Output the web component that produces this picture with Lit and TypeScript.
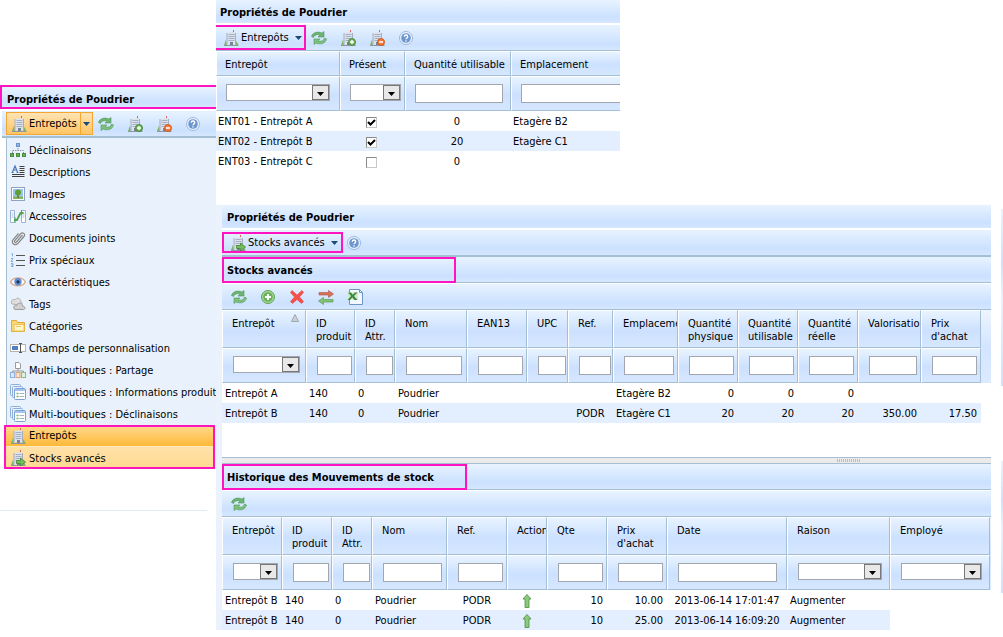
import { LitElement, html, svg, css, TemplateResult, SVGTemplateResult } from "lit";
import { customElement, property } from "lit/decorators.js";
import { classMap } from "lit/directives/class-map.js";
import { styleMap } from "lit/directives/style-map.js";

const building = svg`
  <path d="M1 15L3 9.500L4 15Z M12 15L13.500 11L15.500 15Z" fill="#7fb86c"/>
  <path d="M10.500 0V3" stroke="#e0625c"/>
  <path d="M4 3L11 2L12.500 3V14.500H4Z" fill="#dde2ea"/>
  <path d="M4 3V14.500M12.500 3V14.500" stroke="#a7aebb"/>
  <path d="M5.500 4.500H11.500M5.500 6.500H11.500M5.500 8.500H11.500M5.500 10.500H11.500" stroke="#a3b0c9"/>
  <path d="M7 12h3v3H7z" fill="#76829a"/>
  <path d="M1 15.500H15.500" stroke="#8d95a2"/>`;

const pages = svg`
  <rect x="0.500" y="0.500" width="10" height="11" rx="1" fill="#eaf2fc" stroke="#8fb0dc"/>
  <rect x="2.500" y="2.500" width="10" height="11" rx="1" fill="#eaf2fc" stroke="#8fb0dc"/>
  <rect x="4.500" y="4.500" width="11" height="11" rx="1" fill="#fff" stroke="#7ba0d4"/>
  <path d="M5 6h10" stroke="#a5c4ee" stroke-width="2"/>
  <path d="M6.500 9.500h2M6.500 12.500h2" stroke="#7db464" stroke-width="1.500"/>
  <path d="M9.500 9.500h4.500M9.500 12.500h4.500" stroke="#a3b2c8"/>`;

const ICONS: Record<string, SVGTemplateResult> = {
  building,
  buildingAdd: svg`${building}
    <circle cx="12" cy="12" r="3.500" fill="#6db259" stroke="#4d8f40"/>
    <path d="M10 12h4M12 10v4" stroke="#fff" stroke-width="1.400"/>`,
  buildingRemove: svg`${building}
    <circle cx="12" cy="12" r="3.500" fill="#f07a3c" stroke="#d65a22"/>
    <path d="M10 12h4" stroke="#fff" stroke-width="1.500"/>`,
  buildingGo: svg`${building}
    <path d="M6.500 10.500h4V8l5 4-5 4v-2.500h-4z" fill="#74be58" stroke="#448638" stroke-width=".8"/>`,
  refresh: svg`
    <path d="M0.500 6.500C1.500 2.500 6.500 1 11 3L13 1.500V7H7L9 5.200C6.500 4.200 3.500 4.700 2.500 7.500Z" fill="#6fb374" stroke="#4c9a58" stroke-width=".6"/>
    <path d="M15.500 9C14.500 13.500 9.500 15 5 13L3 14.500V9H9L7 10.800C9.500 11.800 12.500 11.300 13.500 8Z" fill="#7fbf7c" stroke="#4c9a58" stroke-width=".6"/>`,
  help: svg`
    <circle cx="8" cy="8" r="6.500" fill="#eef4fc" stroke="#9db7db"/>
    <circle cx="8" cy="8" r="4.800" fill="#6b96d0"/>
    <path d="M6.300 6.700C6.300 4.500 9.700 4.500 9.700 6.700C9.700 8 8 7.900 8 9.300M8 10.300V11.600" fill="none" stroke="#fff" stroke-width="1.400"/>`,
  add: svg`
    <circle cx="8" cy="8" r="6.500" fill="#a9d89a" stroke="#5ba352"/>
    <circle cx="8" cy="8" r="4.800" fill="#68b35b"/>
    <path d="M5 8h6M8 5v6" stroke="#fff" stroke-width="2"/>`,
  remove: svg`
    <path d="M3 1.500L8 6L13 1.500L14.500 3.500L10.500 8L14.500 12.500L12.500 14.500L8 10.500L3.500 14.500L1.500 12.500L5.500 8L1.500 3.500Z" fill="#f4504a" stroke="#e8413d" stroke-width=".6"/>`,
  swap: svg`
    <path d="M1 3.500h9.500V1.500l5 3.500-5 3.500V6H1z" fill="#d9705c" stroke="#b5503f" stroke-width=".6"/>
    <path d="M15 10.500H5.500V8.500L.5 12l5 3.500V13H15z" fill="#83c276" stroke="#4f9649" stroke-width=".6"/>`,
  excel: svg`
    <path d="M2.500.5h10l3 3v12h-13z" fill="#f3f8fe" stroke="#6c96c4"/>
    <path d="M12.500.5v3h3" fill="none" stroke="#6c96c4"/>
    <path d="M0 3h11v8H0z" fill="#d6ead2"/>
    <path d="M1 3.500h3L5.700 5.800L8 3.500h2.500L7 7L10.500 11H7.500L5.300 8.500L3 11H.5L4 7Z" fill="#3b8a3f"/>`,
  combos: svg`
    <path d="M8 6v3M2.500 11V8.500h11V11" fill="none" stroke="#8795a8" stroke-dasharray="1.500 1"/>
    <rect x="6.500" y="1.500" width="3" height="3" fill="#8fb5ec" stroke="#6a93cf"/>
    <rect x="0.500" y="11.500" width="3" height="3" fill="#5fb04f" stroke="#4a8c40"/>
    <rect x="6.500" y="11.500" width="3" height="3" fill="#5fb04f" stroke="#4a8c40"/>
    <rect x="12.500" y="11.500" width="3" height="3" fill="#5fb04f" stroke="#4a8c40"/>`,
  text: svg`
    <path d="M2.500 8L5 2L7.500 8M3.500 6h3M1.500 8.500h2M6.500 8.500h2" fill="none" stroke="#4776ba" stroke-width="1.200"/>
    <path d="M9.500 2.500h5M9.500 4.500h5M9.500 6.500h5M9.500 8.500h5M2 10.500h12.500M2 12.500h12.500" stroke="#404040"/>`,
  image: svg`
    <rect x="1.500" y="1.500" width="13" height="13" fill="#fff" stroke="#8ea2c4"/>
    <path d="M3 3h10v10H3z" fill="#9cc4ee"/>
    <path d="M3 10.500h10V13H3z" fill="#7fb95a"/>
    <path d="M7.300 8h1.400v4H7.300z" fill="#7a5b32"/>
    <circle cx="8" cy="6.500" r="3" fill="#5f9f34"/>`,
  link: svg`
    <path d="M.5 2.500h4v12h-4zM11.500 2.500h4v12h-4z" fill="#fff" stroke="#9ab3d8"/>
    <path d="M1.500 5h2M1.500 7h2M1.500 9h2M12.500 5h2M12.500 7h2M12.500 9h2" stroke="#a8bddc"/>
    <path d="M4 12H7L10.500 5h3" fill="none" stroke="#55a04f" stroke-width="1.800"/>
    <path d="M5 9v6M11.500 2v5" stroke="#55a04f"/>`,
  clip: svg`
    <path d="M12.500 5L6.500 12C5.200 13.200 3.800 12 4.800 10.700L10.500 4C12.500 1.500 16 4 14 6.500L8 13.300C5 16.500.5 13 3 9.800L8.500 3.300" fill="none" stroke="#858585" stroke-width="1.200"/>`,
  list: svg`
    <path d="M6 3.500h9M6 8.500h9M6 13.500h9" stroke="#555"/>
    <path d="M1.500 2l1-.5v3M1 6.500h2L1 9.500h2M1 11.500h2v3H1M1 13h2" fill="none" stroke="#79a2dc" stroke-width=".9"/>`,
  eye: svg`
    <path d="M.5 8C3.500 2.500 12.500 2.500 15.500 8C12.500 13 3.500 13 .5 8Z" fill="#fff" stroke="#dba98a" stroke-width="1.400"/>
    <circle cx="8" cy="7.800" r="3.700" fill="#5f8dd4"/>
    <circle cx="8" cy="7.800" r="1.600" fill="#1d2f55"/>`,
  cloud: svg`
    <path d="M2 8C0 5 3 2.500 5 4C6.500 1 11 2 10.500 5.500C13 6 12 9 10 9Z" fill="#dedede" stroke="#b2b2b2"/>
    <path d="M5 13.500C2.500 12.500 4 8.500 6.500 9.500C8 6 13 7 12.500 10C15.500 10 15.500 13.500 13.500 13.500Z" fill="#d0d0d0" stroke="#9c9c9c"/>`,
  folder: svg`
    <path d="M1.500 2.500h5l1 2h7v9h-13z" fill="#fbd870" stroke="#e0ab3a"/>
    <path d="M4 6.500h10v6.500H4z" fill="#fff5c6" stroke="#eac25a"/>
    <path d="M6 8.500h5" stroke="#e9c468"/>`,
  field: svg`
    <rect x="0.500" y="4.500" width="15" height="7" fill="#fff" stroke="#b4b4b4"/>
    <path d="M2 6h6v4H2z" fill="#4f80c4"/>
    <path d="M9 3.500h3M10.500 3.500v9M9 12.500h3" stroke="#555"/>`,
  share: svg`
    <path d="M8 6v3M2.500 11V9h11v2" fill="none" stroke="#9a9a9a"/>
    <path d="M5.500.5h3.500l1.500 1.500v4.500h-5z" fill="#fff" stroke="#9a9a9a"/>
    <rect x="0.500" y="10.500" width="4" height="5" fill="#dce9fa" stroke="#8fb0dc"/>
    <rect x="6" y="10.500" width="4" height="5" fill="#fbe6d4" stroke="#dfa277"/>
    <rect x="11.500" y="10.500" width="4" height="5" fill="#e0f2dc" stroke="#8bbf7d"/>`,
  pages,
  up: svg`
    <path d="M8 1.500L12 6H10v8.500H6V6H4Z" fill="#8acb7b" stroke="#4a8c42" stroke-width=".8"/>`,
};

const icon = (name: string): TemplateResult =>
  html`<svg class="icon" viewBox="0 0 16 16" width="16" height="16" aria-hidden="true">${ICONS[name]}</svg>`;

const caret = html`<svg class="caret" viewBox="0 0 7 4" width="7" height="4" aria-hidden="true">
  <path d="M0 0h7L3.500 4z" fill="#1b4a75" /></svg>`;

const tool = (name: string, label: string): TemplateResult =>
  html`<button class="tool" type="button" aria-label=${label}>${icon(name)}</button>`;

const shared = css`
  * {
    box-sizing: border-box;
  }
  .icon,
  .caret {
    display: block;
    flex: none;
  }
`;

interface Column {
  title: string;
  width: number;
  filter?: "text" | "select" | "none";
  align?: "center" | "right";
  sorted?: boolean;
}
type Cell = string | boolean | { icon: string };

@customElement("data-grid")
export class DataGrid extends LitElement {
  @property({ attribute: false }) columns: Column[] = [];
  @property({ attribute: false }) rows: Cell[][] = [];
  @property({ type: Boolean, reflect: true }) compact = false;

  static styles = [
    shared,
    css`
      :host {
        display: block;
        overflow: hidden;
      }
      .spare {
        background: linear-gradient(#eef5fd, #d3e5ff 50%, #dceaff);
        height: 73px;
        margin-bottom: -73px;
      }
      table {
        position: relative;
        table-layout: fixed;
        border-collapse: separate;
        border-spacing: 0;
        width: 0;
      }
      th,
      .filter {
        overflow: hidden;
        vertical-align: top;
        text-align: left;
        font-weight: normal;
        border: 1px solid #a4bed4;
        border-top-color: #fff;
        border-left-color: #fff;
        background: linear-gradient(#e8f3ff, #cce1ff 55%, #d6e7ff);
      }
      th {
        height: 38px;
        padding: 6px 0 0 9px;
        line-height: 13px;
        white-space: pre;
      }
      .filter {
        height: 35px;
        padding: 7px 0 0 10px;
      }
      :host([compact]) th {
        height: 25px;
        padding-left: 8px;
      }
      :host([compact]) .filter {
        padding-left: 9px;
      }
      :host([compact]) .cell {
        padding-left: 2px;
      }
      :host([compact]) .center {
        padding-right: 4px;
      }
      :host([compact]) .spare {
        height: 60px;
        margin-bottom: -60px;
      }
      .head {
        display: flex;
        justify-content: space-between;
      }
      .sort {
        flex: none;
        margin: -3px 6px 0 0;
      }
      input[type="text"],
      select {
        display: block;
        box-sizing: content-box;
        width: 90%;
        height: 17px;
        margin: 0;
        padding: 0;
        border: 1px solid #a3a6ad;
        border-radius: 0;
        background: #fff;
        font: inherit;
      }
      select {
        appearance: none;
        height: 15px;
        background: #fff
          url("data:image/svg+xml,%3Csvg xmlns='http://www.w3.org/2000/svg' width='17' height='15'%3E%3Crect x='.5' y='.5' width='16' height='14' fill='%23e8e8e8' stroke='%23777'/%3E%3Cpath d='M5 7h7L8.500 11z' fill='%23000'/%3E%3C/svg%3E")
          no-repeat right center;
      }
      .cell {
        height: 20px;
        padding: 2px 4px 0 3px;
        line-height: 18px;
        white-space: nowrap;
      }
      .center {
        text-align: center;
        padding-left: 0;
        padding-right: 0;
      }
      .right {
        text-align: right;
      }
      .alt .cell {
        background: #e3eeff;
      }
      .alt .blank {
        background: none;
      }
      .cell .icon {
        margin: 0 auto;
      }
      input[type="checkbox"] {
        appearance: none;
        display: block;
        width: 11px;
        height: 11px;
        margin: 0 auto;
        border: 1px solid #8a8a8a;
        border-right-color: #c8c8c8;
        border-bottom-color: #c8c8c8;
        background: #fff;
      }
      input[type="checkbox"]:checked {
        background: #fff
          url("data:image/svg+xml,%3Csvg xmlns='http://www.w3.org/2000/svg' width='9' height='9'%3E%3Cpath d='M1 4l2.500 2.500L8 2' fill='none' stroke='%23000' stroke-width='2'/%3E%3C/svg%3E")
          center no-repeat;
      }
    `,
  ];

  private filterFor(c: Column) {
    const label = "Filtrer " + c.title.replace("\n", " ");
    if (c.filter === "none") return "";
    if (c.filter === "select") return html`<select aria-label=${label}><option></option></select>`;
    return html`<input type="text" aria-label=${label} />`;
  }

  private value(v: Cell, row: Cell[]) {
    if (typeof v === "boolean")
      return html`<input type="checkbox" aria-label=${String(row[0])} .checked=${v} />`;
    if (typeof v === "object") return icon(v.icon);
    return v;
  }

  render() {
    return html`
      <div class="spare"></div>
      <table>
        <colgroup>
          ${this.columns.map((c) => html`<col style=${styleMap({ width: c.width + "px" })} />`)}
        </colgroup>
        <thead>
          <tr>
            ${this.columns.map(
              (c) => html`<th scope="col">${c.sorted
                ? html`<div class="head"><span>${c.title}</span><svg class="sort" width="8" height="8" viewBox="0 0 8 8" aria-hidden="true"><path d="M.5 7.500L4 .5L7.500 7.500z" fill="#c9cfd6" stroke="#a0a8b0" /></svg></div>`
                : c.title}</th>`
            )}
          </tr>
          <tr>
            ${this.columns.map((c) => html`<td class="filter">${this.filterFor(c)}</td>`)}
          </tr>
        </thead>
        <tbody>
          ${this.rows.map(
            (r, i) => html`<tr class=${classMap({ alt: i % 2 === 1 })}>
              ${this.columns.map(
                (c, j) => html`<td class=${classMap({
                  cell: true,
                  center: c.align === "center",
                  right: c.align === "right",
                  blank: j >= r.length,
                })}>${j < r.length ? this.value(r[j], r) : ""}</td>`
              )}
            </tr>`
          )}
        </tbody>
      </table>
    `;
  }
}

const WAREHOUSE_COLUMNS: Column[] = [
  { title: "Entrepôt", width: 124, filter: "select" },
  { title: "Présent", width: 65, filter: "select", align: "center" },
  { title: "Quantité utilisable", width: 106, align: "center" },
  { title: "Emplacement", width: 160 },
];
const WAREHOUSE_ROWS: Cell[][] = [
  ["ENT01 - Entrepôt A", true, "0", "Etagère B2"],
  ["ENT02 - Entrepôt B", true, "20", "Etagère C1"],
  ["ENT03 - Entrepôt C", false, "0", ""],
];

const STOCK_COLUMNS: Column[] = [
  { title: "Entrepôt", width: 84, filter: "select", sorted: true },
  { title: "ID\nproduit", width: 49 },
  { title: "ID\nAttr.", width: 40 },
  { title: "Nom", width: 72 },
  { title: "EAN13", width: 60 },
  { title: "UPC", width: 41 },
  { title: "Ref.", width: 45, align: "center" },
  { title: "Emplacement", width: 65 },
  { title: "Quantité\nphysique", width: 60, align: "right" },
  { title: "Quantité\nutilisable", width: 60, align: "right" },
  { title: "Quantité\nréelle", width: 60, align: "right" },
  { title: "Valorisation", width: 63, align: "right" },
  { title: "Prix\nd'achat", width: 60, align: "right" },
];
const STOCK_ROWS: Cell[][] = [
  ["Entrepôt A", "140", "0", "Poudrier", "", "", "", "Etagère B2", "0", "0", "0", "", ""],
  ["Entrepôt B", "140", "0", "Poudrier", "", "", "PODR", "Etagère C1", "20", "20", "20", "350.00", "17.50"],
];

const MOVE_COLUMNS: Column[] = [
  { title: "Entrepôt", width: 60, filter: "select" },
  { title: "ID\nproduit", width: 50 },
  { title: "ID\nAttr.", width: 40 },
  { title: "Nom", width: 75 },
  { title: "Ref.", width: 60, align: "center" },
  { title: "Action", width: 40, filter: "none", align: "center" },
  { title: "Qte", width: 60, align: "right" },
  { title: "Prix\nd'achat", width: 60, align: "right" },
  { title: "Date", width: 120, align: "center" },
  { title: "Raison", width: 103, filter: "select" },
  { title: "Employé", width: 100, filter: "select" },
];
const MOVE_ROWS: Cell[][] = [
  ["Entrepôt B", "140", "0", "Poudrier", "PODR", { icon: "up" }, "10", "10.00", "2013-06-14 17:01:47", "Augmenter"],
  ["Entrepôt B", "140", "0", "Poudrier", "PODR", { icon: "up" }, "10", "25.00", "2013-06-14 16:09:20", "Augmenter"],
];

const MENU: [string, string][] = [
  ["combos", "Déclinaisons"],
  ["text", "Descriptions"],
  ["image", "Images"],
  ["link", "Accessoires"],
  ["clip", "Documents joints"],
  ["list", "Prix spéciaux"],
  ["eye", "Caractéristiques"],
  ["cloud", "Tags"],
  ["folder", "Catégories"],
  ["field", "Champs de personnalisation"],
  ["share", "Multi-boutiques : Partage"],
  ["pages", "Multi-boutiques : Informations produit"],
  ["pages", "Multi-boutiques : Déclinaisons"],
];

@customElement("app-root")
export class AppRoot extends LitElement {
  static styles = [
    shared,
    css`
      :host {
        display: flex;
        align-items: flex-start;
        min-height: 100vh;
        overflow: hidden;
        background: #fff;
        color: #000;
        font: 11px/13px "DejaVu Sans Condensed", Tahoma, "DejaVu Sans", sans-serif;
      }
      button {
        font: inherit;
        color: inherit;
        background: none;
        border: 0;
        margin: 0;
        padding: 0;
        text-align: left;
      }
      .side {
        flex: none;
        width: 216px;
        padding-top: 85px;
      }
      .main {
        flex: 1;
        min-width: 0;
      }
      .edge {
        flex: none;
        width: 2px;
        margin-left: 10px;
        padding-top: 209px;
      }
      .sliver {
        height: 177px;
        background: linear-gradient(#e8f3ff, #cce1ff 30%, #e8f3ff 50%, #cce1ff);
      }
      .sliver.low {
        height: 132px;
        margin-top: 75px;
      }
      .title {
        display: flex;
        align-items: center;
        height: 24px;
        margin: 0;
        padding: 2px 0 0 4px;
        font-size: 11px;
        line-height: 13px;
        font-weight: bold;
        background: linear-gradient(#e8f3ff, #cbe1ff 75%, #d6e7ff);
        border-bottom: 1px solid #fff;
      }
      .title.pink {
        border: 2px solid #ff14c0;
        border-right: 0;
        padding: 4px 0 0 5px;
      }
      .title.sub {
        height: 26px;
        padding: 0;
        border-bottom-color: #a4bed4;
      }
      .mark {
        display: flex;
        align-items: center;
        height: 26px;
        width: 234px;
        padding: 2px 0 0 3px;
        border: 2px solid #ff14c0;
      }
      .mark.wide {
        width: 245px;
      }
      .stock .title:first-child {
        padding-left: 5px;
      }
      .bar {
        display: flex;
        align-items: center;
        gap: 13px;
        height: 27px;
        border-top: 1px solid #fff;
        border-bottom: 1px solid #a4bed4;
        background: linear-gradient(#e8f3ff, #cbe1ff 75%, #d6e7ff);
      }
      .bar.thick {
        height: 28px;
        border-bottom-width: 2px;
      }
      .bar.tools {
        padding-left: 9px;
      }
      .side .bar {
        height: 29px;
        margin-left: 2px;
        padding-left: 4px;
        border-top-width: 2px;
        border-bottom-width: 2px;
      }
      .pick {
        display: flex;
        align-items: center;
        gap: 2px;
        height: 23px;
      }
      .pick .caret {
        margin-left: 4px;
      }
      .pick.hot {
        margin-right: -8px;
        padding-left: 4px;
        border: 1px solid #f5a632;
        background: linear-gradient(#ffe3b4, #ffc564);
      }
      .drop {
        display: flex;
        align-items: center;
        align-self: stretch;
        margin-left: 1px;
        padding: 0 2px;
        border-left: 1px solid #f5a632;
      }
      .pick .drop .caret {
        margin: 0;
      }
      .pick.ring {
        height: 25px;
        margin-right: -8px;
        padding: 0 2px 0 7px;
        border: 2px solid #ff14c0;
        border-left: 0;
      }
      .pick.box {
        height: 21px;
        margin-right: -10px;
        padding: 0 3px 0 6px;
        border: 2px solid #ff14c0;
      }
      .menu {
        margin: 0 0 0 6px;
        padding: 1px 0 0;
        border-left: 1px solid #a4bed4;
        background: #e9f2fc;
        list-style: none;
      }
      .entry {
        display: flex;
        align-items: center;
        gap: 3px;
        width: 100%;
        height: 22px;
        padding-left: 3px;
        white-space: nowrap;
      }
      .pair {
        margin: 0 1px 0 -3px;
        outline: 2px solid #ff14c0;
        outline-offset: -2px;
      }
      .pair .entry {
        padding-left: 6px;
        background: linear-gradient(#ffe2a8, #ffd890);
      }
      .pair .entry.on {
        background: linear-gradient(#ffdb92, #ffb938);
        border-bottom: 1px solid #ffe9c2;
      }
      .plain {
        margin: 0;
        padding: 0;
        list-style: none;
      }
      .rule {
        margin: 41px 9px 0 0;
        border: 0;
        border-top: 1px solid #e2eaf5;
      }
      .top {
        max-width: 404px;
        margin-bottom: 34px;
      }
      .stock {
        border-left: 6px solid #ecf2fb;
      }
      .first {
        padding-bottom: 34px;
      }
      .split {
        display: flex;
        justify-content: flex-end;
        align-items: center;
        height: 7px;
        padding-right: 130px;
        border: solid #a4bed4;
        border-width: 1px 0;
        background: #ebebeb;
      }
      .grip {
        width: 24px;
        height: 3px;
        background: repeating-linear-gradient(90deg, #b5bdc8 0 1px, transparent 1px 2px);
      }
    `,
  ];

  private entry([glyph, label]: [string, string], on = false) {
    return html`<li><button type="button" class=${classMap({ entry: true, on })}>${icon(glyph)}${label}</button></li>`;
  }

  render() {
    const warehouseTools = html`
      ${tool("refresh", "Actualiser")} ${tool("buildingAdd", "Associer")}
      ${tool("buildingRemove", "Dissocier")} ${tool("help", "Aide")}
    `;
    return html`
      <aside class="side">
        <h2 class="title pink">Propriétés de Poudrier</h2>
        <div class="bar">
          <button type="button" class="pick hot">${icon("building")}Entrepôts<span class="drop">${caret}</span></button>
          ${warehouseTools}
        </div>
        <ul class="menu">
          ${MENU.map((m) => this.entry(m))}
          <li class="pair">
            <ul class="plain">
              ${this.entry(["building", "Entrepôts"], true)} ${this.entry(["buildingGo", "Stocks avancés"])}
            </ul>
          </li>
        </ul>
        <hr class="rule" />
      </aside>

      <main class="main">
        <section class="top">
          <h2 class="title">Propriétés de Poudrier</h2>
          <div class="bar">
            <button type="button" class="pick ring">${icon("building")}Entrepôts${caret}</button>
            ${warehouseTools}
          </div>
          <data-grid compact .columns=${WAREHOUSE_COLUMNS} .rows=${WAREHOUSE_ROWS}></data-grid>
        </section>

        <section class="stock">
          <h2 class="title">Propriétés de Poudrier</h2>
          <div class="bar thick">
            <button type="button" class="pick box">${icon("buildingGo")}Stocks avancés${caret}</button>
            ${tool("help", "Aide")}
          </div>
          <h3 class="title sub"><span class="mark">Stocks avancés</span></h3>
          <div class="bar tools">
            ${tool("refresh", "Actualiser")} ${tool("add", "Ajouter")} ${tool("remove", "Supprimer")}
            ${tool("swap", "Transférer")} ${tool("excel", "Exporter")}
          </div>
          <data-grid class="first" .columns=${STOCK_COLUMNS} .rows=${STOCK_ROWS}></data-grid>
          <div class="split"><span class="grip"></span></div>
          <h3 class="title sub"><span class="mark wide">Historique des Mouvements de stock</span></h3>
          <div class="bar tools">${tool("refresh", "Actualiser")}</div>
          <data-grid .columns=${MOVE_COLUMNS} .rows=${MOVE_ROWS}></data-grid>
        </section>
      </main>

      <div class="edge">
        <div class="sliver"></div>
        <div class="sliver low"></div>
      </div>
    `;
  }
}
